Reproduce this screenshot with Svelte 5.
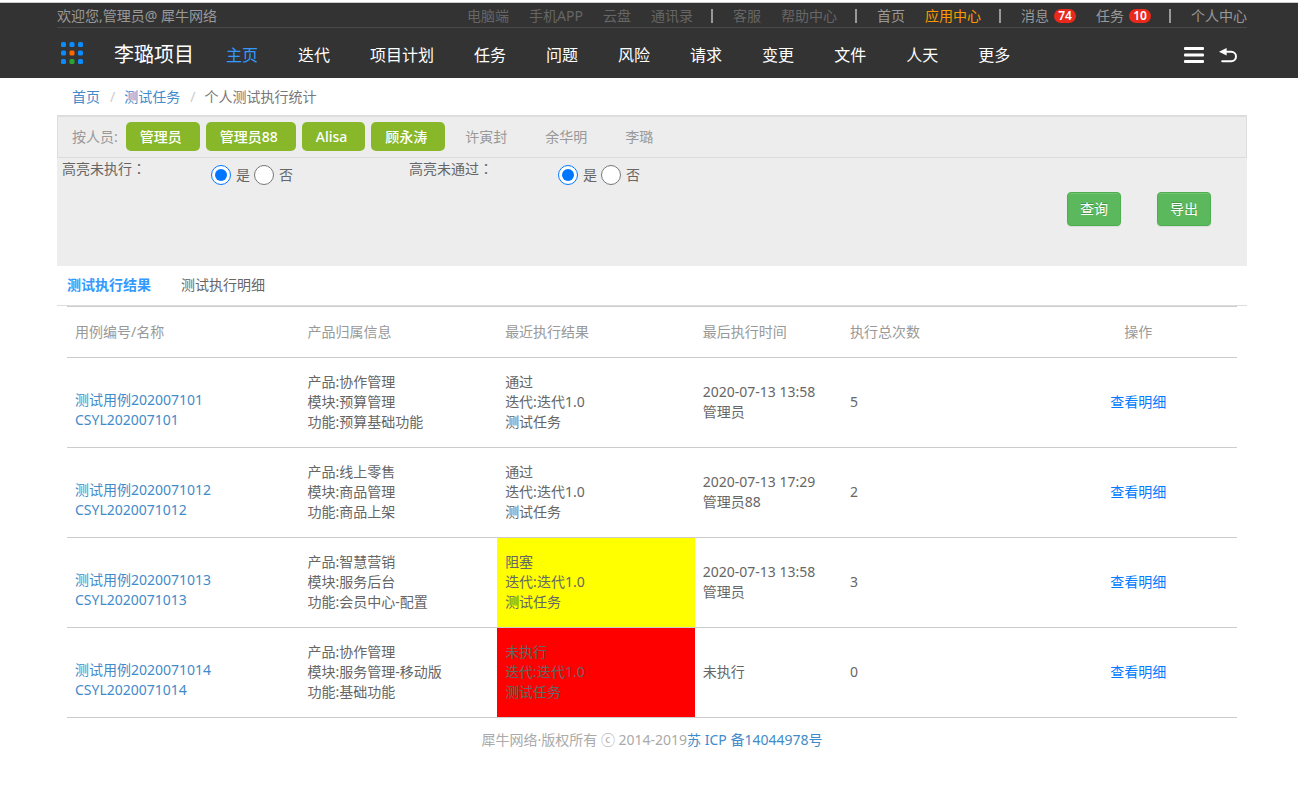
<script>
  const topLinks = [
    { text: '电脑端', kind: 'dim' },
    { text: '手机APP', kind: 'dim' },
    { text: '云盘', kind: 'dim' },
    { text: '通讯录', kind: 'dim' },
    { sep: true },
    { text: '客服', kind: 'dim' },
    { text: '帮助中心', kind: 'dim' },
    { sep: true },
    { text: '首页' },
    { text: '应用中心', kind: 'hot' },
    { sep: true },
    { text: '消息', count: 74 },
    { text: '任务', count: 10 },
    { sep: true },
    { text: '个人中心' }
  ];

  const navs = ['主页', '迭代', '项目计划', '任务', '问题', '风险', '请求', '变更', '文件', '人天', '更多'];
  const tabs = ['测试执行结果', '测试执行明细'];

  let nav = $state('主页');
  let tab = $state('测试执行结果');
  let markUnrun = $state('是');
  let markFailed = $state('是');

  let people = $state([
    { name: '管理员', on: true },
    { name: '管理员88', on: true },
    { name: 'Alisa', on: true },
    { name: '顾永涛', on: true },
    { name: '许寅封', on: false },
    { name: '余华明', on: false },
    { name: '李璐', on: false }
  ]);

  const rows = [
    {
      name: '测试用例202007101', code: 'CSYL202007101',
      product: '协作管理', module: '预算管理', feature: '预算基础功能',
      result: '通过', time: '2020-07-13 13:58', user: '管理员', count: 5
    },
    {
      name: '测试用例2020071012', code: 'CSYL2020071012',
      product: '线上零售', module: '商品管理', feature: '商品上架',
      result: '通过', time: '2020-07-13 17:29', user: '管理员88', count: 2
    },
    {
      name: '测试用例2020071013', code: 'CSYL2020071013',
      product: '智慧营销', module: '服务后台', feature: '会员中心-配置',
      result: '阻塞', time: '2020-07-13 13:58', user: '管理员', count: 3
    },
    {
      name: '测试用例2020071014', code: 'CSYL2020071014',
      product: '协作管理', module: '服务管理-移动版', feature: '基础功能',
      result: '未执行', time: '未执行', user: '', count: 0
    }
  ];

  function isFailed(row) {
    return markFailed === '是' && row.result === '阻塞';
  }

  function isUnrun(row) {
    return markUnrun === '是' && row.result === '未执行';
  }
</script>

<header class="header">
  <div class="topbar">
    <span>欢迎您,管理员@ 犀牛网络</span>
    <div class="top-links">
      {#each topLinks as item}
        {#if item.sep}
          <i class="sep"></i>
        {:else}
          <a href="#top" class={item.kind}>{item.text}{#if item.count}<span class="badge">{item.count}</span>{/if}</a>
        {/if}
      {/each}
    </div>
  </div>
  <div class="navbar">
    <a href="#apps" class="apps" aria-label="应用">
      <svg width="24" height="24" viewBox="0 0 24 24" fill="#0a8cff">
        <rect x="1" y="1" width="5" height="5" rx="1.5" />
        <rect x="9.5" y="1" width="5" height="5" rx="1.5" />
        <rect x="18" y="1" width="5" height="5" rx="1.5" />
        <rect x="1" y="9.5" width="5" height="5" rx="1.5" />
        <rect x="9.5" y="9.5" width="5" height="5" rx="1.5" fill="#ff6600" />
        <rect x="18" y="9.5" width="5" height="5" rx="1.5" />
        <rect x="1" y="18" width="5" height="5" rx="1.5" />
        <rect x="9.5" y="18" width="5" height="5" rx="1.5" fill="#2aa52f" />
        <rect x="18" y="18" width="5" height="5" rx="1.5" />
      </svg>
    </a>
    <a href="#project" class="brand">李璐项目</a>
    <nav>
      {#each navs as item}
        <a href="#nav" class:active={nav === item} onclick={() => (nav = item)}>{item}</a>
      {/each}
    </nav>
    <div class="tools">
      <button type="button" aria-label="菜单">
        <svg width="20" height="16" viewBox="0 0 20 16" fill="#fff">
          <rect width="20" height="3" rx="1" />
          <rect y="6.5" width="20" height="3" rx="1" />
          <rect y="13" width="20" height="3" rx="1" />
        </svg>
      </button>
      <button type="button" aria-label="返回">
        <svg width="19" height="16" viewBox="0 0 19 16" fill="none">
          <path d="M0 4.8 7.6 1v7.6z" fill="#fff" />
          <path d="M6 4.8h6.2a4.8 4.7 0 0 1 0 9.4H3.2" stroke="#fff" stroke-width="2" stroke-linecap="round" />
        </svg>
      </button>
    </div>
  </div>
</header>

<main class="page">
  <div class="crumbs">
    <a href="#home">首页</a><span class="slash">/</span><a href="#task">测试任务</a><span class="slash">/</span><span>个人测试执行统计</span>
  </div>

  <section class="filter">
    <div class="people">
      <span class="people-label">按人员:</span>
      {#each people as p}
        <button type="button" class="person" class:on={p.on} onclick={() => (p.on = !p.on)}>{p.name}</button>
      {/each}
    </div>
    <form class="options" onsubmit={(e) => e.preventDefault()}>
      <div class="option">
        <span>高亮未执行<span class="colon">：</span></span>
        <div class="radios">
          <label><input type="radio" name="unrun" value="是" bind:group={markUnrun} />是</label>
          <label><input type="radio" name="unrun" value="否" bind:group={markUnrun} />否</label>
        </div>
      </div>
      <div class="option">
        <span>高亮未通过<span class="colon">：</span></span>
        <div class="radios">
          <label><input type="radio" name="failed" value="是" bind:group={markFailed} />是</label>
          <label><input type="radio" name="failed" value="否" bind:group={markFailed} />否</label>
        </div>
      </div>
      <div class="actions">
        <button type="submit" class="btn">查询</button>
        <button type="button" class="btn">导出</button>
      </div>
    </form>
  </section>

  <div class="tabs">
    {#each tabs as item}
      <button type="button" class:active={tab === item} onclick={() => (tab = item)}>{item}</button>
    {/each}
  </div>

  <div class="table-wrap">
    <table>
      <colgroup>
        <col class="c-name" />
        <col />
        <col />
        <col class="c-time" />
        <col />
        <col />
      </colgroup>
      <thead>
        <tr>
          <th>用例编号/名称</th>
          <th>产品归属信息</th>
          <th>最近执行结果</th>
          <th>最后执行时间</th>
          <th>执行总次数</th>
          <th class="op">操作</th>
        </tr>
      </thead>
      <tbody>
        {#each rows as row}
          <tr>
            <td class="case"><a href="#case">{row.name}<br />{row.code}</a></td>
            <td>产品:{row.product}<br />模块:{row.module}<br />功能:{row.feature}</td>
            <td class:failed={isFailed(row)} class:unrun={isUnrun(row)}>{row.result}<br />迭代:迭代1.0<br />测试任务</td>
            <td>{row.time}{#if row.user}<br />{row.user}{/if}</td>
            <td>{row.count}</td>
            <td class="op"><a href="#detail">查看明细</a></td>
          </tr>
        {/each}
      </tbody>
    </table>
  </div>
</main>

<footer>犀牛网络·版权所有 ⓒ 2014-2019<a href="#icp">苏 ICP 备14044978号</a></footer>

<style>
  :global(body) {
    margin: 0;
    background: #fff;
    color: #666;
    font: 14px/20px "Noto Sans", "Noto Sans CJK SC", sans-serif;
  }
  a {
    color: #428bca;
    text-decoration: none;
  }
  button {
    font: inherit;
    cursor: pointer;
  }

  .header {
    margin-top: 2px;
    padding: 0 51px 0 57px;
    border-top: 1px solid #ccc;
    background: #333;
    color: #999;
  }
  .topbar {
    display: flex;
    justify-content: space-between;
    height: 24px;
    line-height: 26px;
    border-bottom: 1px solid #484848;
  }
  .top-links {
    display: flex;
    align-items: center;
    gap: 20px;
    height: 26px;
  }
  .top-links a {
    display: flex;
    align-items: center;
    color: #999;
  }
  .top-links a.dim {
    color: #666;
  }
  .top-links a.hot {
    color: #ff9900;
  }
  .sep {
    width: 2px;
    height: 14px;
    margin-left: -2px;
    background: #999;
  }
  .badge {
    width: 22px;
    height: 14px;
    margin-left: 5px;
    border-radius: 7px;
    background: #e8291c;
    color: #fff;
    font-size: 12px;
    font-weight: 600;
    line-height: 14px;
    text-align: center;
  }

  .navbar {
    display: flex;
    align-items: center;
    height: 50px;
    font-size: 16px;
  }
  .apps {
    display: flex;
    margin: 0 30px 0 3px;
  }
  .brand {
    margin-right: 32px;
    padding-top: 4px;
    color: #fff;
    font-size: 20px;
  }
  nav {
    display: flex;
    gap: 40px;
    padding-top: 4px;
  }
  nav a {
    color: #fff;
  }
  nav a.active {
    color: #3399ff;
  }
  .tools {
    display: flex;
    gap: 15px;
    margin-left: auto;
    padding: 4px 9px 0 0;
  }
  .tools button {
    display: flex;
    padding: 0;
    border: none;
    background: none;
  }

  .page {
    padding: 0 51px 0 57px;
  }
  .crumbs {
    padding: 9px 15px 8px;
    color: #777;
  }
  .slash {
    padding: 0 9px 0 10px;
    color: #ccc;
  }

  .filter {
    background: #ededed;
  }
  .people {
    display: flex;
    align-items: center;
    gap: 6px;
    padding: 5px 14px 6px;
    border: 1px solid #ddd;
    border-top-width: 2px;
    color: #999;
  }
  .people-label {
    margin-right: 2px;
  }
  .person {
    padding: 5px 18px 4px 14px;
    border: none;
    border-radius: 5px;
    background: none;
    color: #999;
  }
  .person.on {
    background: #88b72a;
    color: #fff;
    font-weight: 500;
  }
  .options {
    display: grid;
    grid-template-columns: 347fr 347fr 496fr;
    height: 108px;
  }
  .option {
    display: grid;
    grid-template-columns: 149px 1fr;
    align-items: start;
    padding: 1px 5px;
  }
  .colon {
    font-family: "Noto Sans CJK TC", sans-serif;
    line-height: 1;
  }
  .radios {
    display: flex;
    gap: 4px;
    padding-top: 6px;
  }
  .radios label {
    display: flex;
    gap: 5px;
  }
  .radios input {
    width: 20px;
    height: 20px;
    margin: 0;
    accent-color: #0075ff;
  }
  .actions {
    display: flex;
    justify-content: flex-end;
    align-items: flex-start;
    gap: 36px;
    padding: 34px 36px 0 0;
  }
  .btn {
    padding: 6px 12px;
    border: 1px solid #4cae4c;
    border-radius: 4px;
    background: #5cb85c;
    box-shadow: inset 0 1px 0 rgba(255, 255, 255, 0.15), 0 1px 1px rgba(0, 0, 0, 0.075);
    color: #fff;
    text-shadow: 0 -1px 0 rgba(0, 0, 0, 0.2);
  }

  .tabs {
    display: flex;
    gap: 30px;
    padding: 9px 10px 10px;
    border-bottom: 1px solid #ddd;
  }
  .tabs button {
    padding: 0;
    border: none;
    background: none;
    color: #666;
  }
  .tabs button.active {
    color: #3399ff;
    font-weight: 700;
  }

  .table-wrap {
    padding: 0 10px;
  }
  table {
    width: 100%;
    border-top: 1px solid #ccc;
    border-collapse: separate;
    border-spacing: 0;
    table-layout: fixed;
  }
  col {
    width: 16.9%;
  }
  .c-name {
    width: 19.9%;
  }
  .c-time {
    width: 12.6%;
  }
  th,
  td {
    padding: 14px 8px 15px;
    border-bottom: 1px solid #ccc;
    text-align: left;
    vertical-align: middle;
  }
  th {
    padding-top: 15px;
    color: #999;
    font-weight: 400;
  }
  .case {
    padding-top: 30px;
  }
  .op {
    text-align: center;
  }
  .op a {
    color: #007bff;
  }
  .failed {
    background: #ff0;
  }
  .unrun {
    background: #f00;
  }

  footer {
    padding: 12px 45px 42px 51px;
    color: #aaa;
    text-align: center;
  }
</style>
